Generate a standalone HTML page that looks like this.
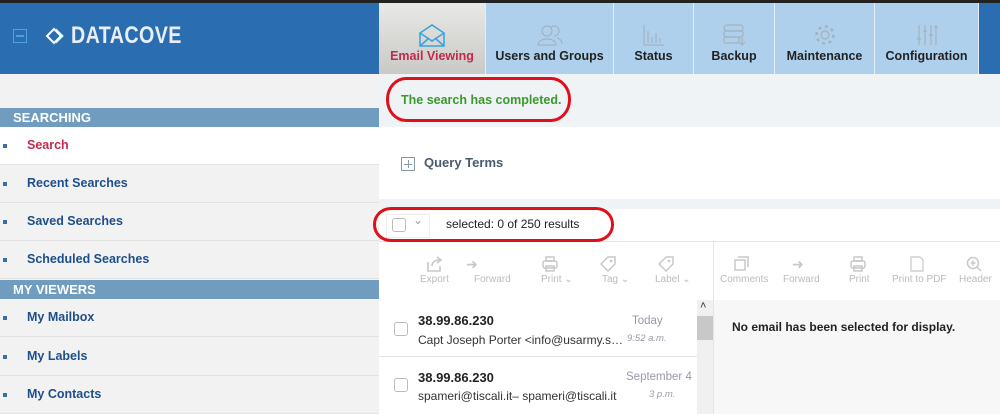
<!DOCTYPE html>
<html><head><style>
*{margin:0;padding:0;box-sizing:border-box}
body{width:1000px;height:414px;overflow:hidden;font-family:"Liberation Sans",sans-serif;background:#fff;position:relative}
.a{position:absolute}
.tab{position:absolute;top:3px;height:71px;background:#aed0ec;text-align:center;font-weight:bold;font-size:12.5px;color:#222;border-right:1px solid #e4eef7}
.tab span{position:absolute;left:0;right:0;top:46px}
.tab svg{position:absolute;left:50%;top:20px;transform:translateX(-50%)}
.si{position:absolute;left:0;width:379px;height:38px;border-bottom:1px solid #e2e2e2;font-size:12.5px;font-weight:bold;color:#1e4f8a;padding:11px 0 0 27px}
.si:before{content:"";position:absolute;left:3px;top:17px;width:4px;height:4px;background:#3a6ea5}
.sh{position:absolute;left:0;width:379px;height:19px;background:#6f9cbf;color:#fff;font-weight:bold;font-size:13px;padding:2px 0 0 13px}
.tb{position:absolute;top:274px;font-size:10px;color:#bbb;text-align:center}
.tbi{position:absolute;top:256px;color:#c8c8c8}
.cb{position:absolute;width:14px;height:14px;border:1px solid #bbb;border-radius:3px;background:#fff}
</style></head><body>
<div class="a" style="left:0;top:0;width:1000px;height:3px;background:#222"></div>
<div class="a" style="left:0;top:3px;width:379px;height:71px;background:#2a6db0"></div>
<div class="a" style="left:13px;top:29px;width:14px;height:14px;border:1.5px solid #4aa3df"></div>
<div class="a" style="left:16px;top:35px;width:8px;height:1.5px;background:#4aa3df"></div>
<svg class="a" style="left:44px;top:26px" width="22" height="20"><path d="M3 10 L10 3 L17 10 L10 17 Z" fill="none" stroke="#fff" stroke-width="2"/><path d="M12 3 L19 10 L12 17" fill="none" stroke="#cfe" stroke-width="1.2"/></svg>
<div class="a" style="left:71px;top:22px;color:#e8eef5;font-weight:bold;font-size:24px;letter-spacing:0.5px;transform:scaleX(.82);transform-origin:left">DATACOVE</div>
<div class="tab" style="left:379px;width:107px;background:linear-gradient(#e8e8e6,#c9c9c6);color:#c4284c"><svg width="30" height="24"><path d="M3 10 L15 2 L27 10 V23 H3 Z M3 10 L15 18 L27 10 M3 23 L12 15 M27 23 L18 15" fill="none" stroke="#3aa3dc" stroke-width="1.6"/></svg><span>Email Viewing</span></div>
<div class="tab" style="left:486px;width:128px"><svg width="26" height="24"><circle cx="10" cy="8" r="5" fill="none" stroke="#a4b2bf" stroke-width="1.2"/><path d="M1 22 C1 14 19 14 19 22 Z M14 4 A5 5 0 1 1 17 13 M20 15 C24 16 25 19 25 21" fill="none" stroke="#a4b2bf" stroke-width="1.2"/></svg><span>Users and Groups</span></div>
<div class="tab" style="left:614px;width:80px"><svg width="24" height="24"><path d="M2 2 V22 H22 M6 20 V8 M10 20 V14 M14 20 V10 M18 20 V15" fill="none" stroke="#a4b2bf" stroke-width="1.2"/></svg><span>Status</span></div>
<div class="tab" style="left:694px;width:81px"><svg width="24" height="24"><rect x="2" y="2" width="19" height="6" rx="3" fill="none" stroke="#a4b2bf" stroke-width="1.2"/><rect x="2" y="8" width="19" height="6" rx="2" fill="none" stroke="#a4b2bf" stroke-width="1.2"/><rect x="2" y="14" width="15" height="6" rx="2" fill="none" stroke="#a4b2bf" stroke-width="1.2"/><path d="M20 15 V22 M17 19 L20 22 L23 19" fill="none" stroke="#a4b2bf" stroke-width="1.2"/></svg><span>Backup</span></div>
<div class="tab" style="left:775px;width:100px"><svg width="24" height="24"><circle cx="12" cy="12" r="4" fill="none" stroke="#a4b2bf" stroke-width="1.2"/><circle cx="12" cy="12" r="8.5" fill="none" stroke="#a4b2bf" stroke-width="2.5" stroke-dasharray="3 3.6"/></svg><span>Maintenance</span></div>
<div class="tab" style="left:875px;width:104px"><svg width="22" height="24"><path d="M3 2 V22 M9 2 V22 M15 2 V22 M20 2 V22 M1 16 H5 M7 8 H11 M13 12 H17 M18 4 H22" fill="none" stroke="#a4b2bf" stroke-width="1.2"/></svg><span>Configuration</span></div>
<div class="a" style="left:979px;top:3px;width:21px;height:71px;background:#2a6db0"></div>
<div class="a" style="left:0;top:74px;width:379px;height:340px;background:#f2f2f2"></div>
<div class="sh" style="top:108px">SEARCHING</div>
<div class="si" style="top:127px;background:#fff;color:#c4284c">Search</div>
<div class="si" style="top:165px">Recent Searches</div>
<div class="si" style="top:203px">Saved Searches</div>
<div class="si" style="top:241px">Scheduled Searches</div>
<div class="sh" style="top:280px">MY VIEWERS</div>
<div class="si" style="top:299px">My Mailbox</div>
<div class="si" style="top:338px">My Labels</div>
<div class="si" style="top:376px">My Contacts</div>
<div class="a" style="left:379px;top:74px;width:621px;height:53px;background:#eff3f6"></div>
<div class="a" style="left:401px;top:93px;color:#3a9a2a;font-weight:bold;font-size:12.5px">The search has completed.</div>
<div class="a" style="left:386px;top:77px;width:185px;height:45px;border:3px solid #e0101a;border-radius:20px/22px"></div>
<div class="a" style="left:401px;top:157px;width:14px;height:14px;border:1px solid #8899aa"></div>
<div class="a" style="left:404px;top:163.5px;width:8px;height:1px;background:#8899aa"></div>
<div class="a" style="left:407.5px;top:160px;width:1px;height:8px;background:#8899aa"></div>
<div class="a" style="left:424px;top:155px;color:#4a5a6e;font-weight:bold;font-size:13px">Query Terms</div>
<div class="a" style="left:379px;top:199px;width:621px;height:10px;background:#eff3f6"></div>
<div class="a" style="left:379px;top:241px;width:621px;height:1px;background:#e4e4e4"></div>
<div class="a" style="left:386px;top:214px;width:44px;height:24px;border:1px solid #eee"></div>
<div class="cb" style="left:392px;top:218px"></div>
<div class="a" style="left:413px;top:213px;font-size:12px;color:#99a">&#8964;</div>
<div class="a" style="left:446px;top:217px;font-size:12px;color:#222">selected: 0 of 250 results</div>
<div class="a" style="left:373px;top:207px;width:241px;height:35px;border:3px solid #e0101a;border-radius:18px/17px"></div>
<div class="a" style="left:713px;top:242px;width:1px;height:172px;background:#e4e4e4"></div>
<div class="tbi" style="left:426px"><svg width="18" height="16"><path d="M2 6 V15 H14 V10 M6 10 C6 5 10 4 14 4 M11 1 L15 4 L11 7" fill="none" stroke="#c8c8c8" stroke-width="1.6"/></svg></div>
<div class="tb" style="left:420px">Export</div>
<div class="tbi" style="left:466px;font-size:14px">&#10140;</div><div class="tb" style="left:474px">Forward</div>
<div class="tbi" style="left:542px"><svg width="16" height="16"><rect x="4" y="1" width="8" height="4" fill="none" stroke="#c8c8c8" stroke-width="1.5"/><rect x="1" y="5" width="14" height="7" rx="2" fill="none" stroke="#c8c8c8" stroke-width="1.5"/><rect x="4" y="10" width="8" height="5" fill="none" stroke="#c8c8c8" stroke-width="1.5"/></svg></div><div class="tb" style="left:541px">Print &#8964;</div>
<div class="tbi" style="left:600px"><svg width="16" height="16"><path d="M8 1 H15 V8 L8 15 L1 8 Z" fill="none" stroke="#c8c8c8" stroke-width="1.5"/><circle cx="11" cy="5" r="1.3" fill="#c8c8c8"/></svg></div><div class="tb" style="left:602px">Tag &#8964;</div>
<div class="tbi" style="left:658px"><svg width="16" height="16"><path d="M8 1 H15 V8 L8 15 L1 8 Z" fill="none" stroke="#c8c8c8" stroke-width="1.5"/><circle cx="11" cy="5" r="1.3" fill="#c8c8c8"/></svg></div><div class="tb" style="left:655px">Label &#8964;</div>
<div class="tbi" style="left:734px"><svg width="16" height="16"><rect x="1" y="4" width="10" height="10" fill="none" stroke="#c8c8c8" stroke-width="1.5"/><path d="M4 1 H14 V11" fill="none" stroke="#c8c8c8" stroke-width="1.5"/></svg></div><div class="tb" style="left:720px">Comments</div>
<div class="tbi" style="left:792px;font-size:14px">&#10140;</div><div class="tb" style="left:783px">Forward</div>
<div class="tbi" style="left:850px"><svg width="16" height="16"><rect x="4" y="1" width="8" height="4" fill="none" stroke="#c8c8c8" stroke-width="1.5"/><rect x="1" y="5" width="14" height="7" rx="2" fill="none" stroke="#c8c8c8" stroke-width="1.5"/><rect x="4" y="10" width="8" height="5" fill="none" stroke="#c8c8c8" stroke-width="1.5"/></svg></div><div class="tb" style="left:849px">Print</div>
<div class="tbi" style="left:910px"><svg width="14" height="16"><path d="M1 1 H10 L13 4 V15 H1 Z" fill="none" stroke="#c8c8c8" stroke-width="1.2"/></svg></div><div class="tb" style="left:892px">Print to PDF</div>
<div class="tbi" style="left:966px"><svg width="16" height="16"><circle cx="7" cy="7" r="5.5" fill="none" stroke="#c8c8c8" stroke-width="1.5"/><path d="M11 11 L15 15 M4.5 7 H9.5 M7 4.5 V9.5" stroke="#c8c8c8" stroke-width="1.5"/></svg></div><div class="tb" style="left:959px">Header</div>
<div class="a" style="left:714px;top:300px;width:286px;height:114px;background:#f7f7f7"></div>
<div class="a" style="left:732px;top:320px;font-size:12px;font-weight:bold;color:#222">No email has been selected for display.</div>
<div class="a" style="left:697px;top:300px;width:16px;height:114px;background:#f0f0f0"></div>
<div class="a" style="left:697px;top:316px;width:16px;height:24px;background:#c8c8c8"></div>
<div class="a" style="left:700px;top:300px;font-size:11px;color:#333">&#708;</div>
<div class="a" style="left:379px;top:356px;width:318px;height:1px;background:#e4e4e4"></div>
<div class="cb" style="left:394px;top:322px"></div>
<div class="a" style="left:418px;top:313px;font-size:13px;font-weight:bold;color:#222">38.99.86.230</div>
<div class="a" style="left:418px;top:333px;font-size:12px;color:#333">Capt Joseph Porter &lt;info@usarmy.s…</div>
<div class="a" style="left:632px;top:315px;font-size:11.5px;color:#99a">Today</div>
<div class="a" style="left:627px;top:333px;font-size:9.5px;color:#99a;font-style:italic">9:52 a.m.</div>
<div class="cb" style="left:394px;top:378px"></div>
<div class="a" style="left:418px;top:370px;font-size:13px;font-weight:bold;color:#222">38.99.86.230</div>
<div class="a" style="left:418px;top:389px;font-size:12px;color:#333">spameri@tiscali.it– spameri@tiscali.it</div>
<div class="a" style="left:626px;top:371px;font-size:11.5px;color:#99a">September 4</div>
<div class="a" style="left:649px;top:389px;font-size:9.5px;color:#99a;font-style:italic">3 p.m.</div>
</body></html>
